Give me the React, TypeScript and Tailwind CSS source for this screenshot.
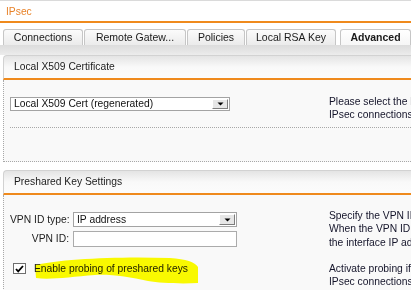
import React from "react";

function Select({ value, width }: { value: string; width: string }) {
  return (
    <div
      className={`relative flex h-full items-center border border-[#a3a3a3] bg-white pl-[3px] text-[#111] ${width}`}
    >
      <span className="whitespace-nowrap">{value}</span>
      <span className="absolute top-[1px] right-[1px] bottom-[1px] flex w-[16px] items-center justify-center border border-t-white border-l-white border-r-[#7d7d7d] border-b-[#7d7d7d] bg-[#e6e6e6]">
        <svg width="7" height="4" viewBox="0 0 7 4">
          <path d="M0.5 0.5h6L3.5 3.5z" fill="#000" />
        </svg>
      </span>
    </div>
  );
}

function Tab({
  label,
  className,
  active = false,
}: {
  label: string;
  className: string;
  active?: boolean;
}) {
  return (
    <div
      className={`flex h-[16px] shrink-0 items-center justify-center rounded-t-[3px] border border-b-0 border-[#c6c6c6] text-[10.5px] text-[#1a1a1a] ${
        active
          ? "bg-gradient-to-b from-white to-[#f6f6f6] font-bold"
          : "bg-gradient-to-b from-[#fbfbfb] to-[#ebebeb]"
      } ${className}`}
    >
      {label}
    </div>
  );
}

function SectionHeader({ title }: { title: string }) {
  return (
    <div className="box-border flex h-[25px] items-center rounded-tl-[4px] border-t border-l border-b-2 border-t-[#d2d2d2] border-l-[#d2d2d2] border-b-[#ef8a1d] bg-gradient-to-b from-[#e4e4e4] via-[#f9f9f9] to-[#fcfcfc] pl-[10px] text-[#1c1c1c]">
      {title}
    </div>
  );
}

export default function App() {
  return (
    <div className="relative h-[290px] w-[411px] overflow-hidden bg-white font-['Liberation_Sans',Arial,sans-serif] text-[10.3px]">
      {/* page title */}
      <div className="box-border h-[23px] border-t border-b-2 border-t-[#dadada] border-b-[#ef8a1d]">
        <div className="pt-[3px] pl-[6px] leading-[16px] text-[#e8832a]">IPsec</div>
      </div>

      {/* tabs */}
      <div className="mt-[6px] flex h-[16px] items-end">
        <Tab label="Connections" className="ml-[3px] w-[80px]" />
        <Tab label="Remote Gatew..." className="ml-[1px] w-[102px]" />
        <Tab label="Policies" className="ml-[1px] w-[58px]" />
        <Tab label="Local RSA Key" className="ml-[1px] w-[90px]" />
        <Tab label="Advanced" className="ml-[4px] w-[71px]" active />
      </div>
      <div className="h-[10px] bg-gradient-to-b from-[#dcdcdc] to-[#ececec]" />

      {/* Local X509 Certificate */}
      <section className="ml-[3px]">
        <SectionHeader title="Local X509 Certificate" />
        <div className="box-border h-[82px] border-b border-l border-dotted border-[#a8a8a8] bg-[#f9f9f9] pt-[15px]">
          <div className="flex">
            <div className="w-[325px] shrink-0 pl-[6px]">
              <div className="mt-[2px] h-[14px]">
                <Select value="Local X509 Cert (regenerated)" width="w-[220px]" />
              </div>
            </div>
            <div className="whitespace-nowrap leading-[13px] text-[#14142a]">
              <div>Please select the local certificate to be used</div>
              <div>IPsec connections using X509 authentication.</div>
            </div>
          </div>
          <div className="mt-[6px] ml-[6px] border-t border-dotted border-[#a8a8a8]" />
        </div>
      </section>

      {/* Preshared Key Settings */}
      <section className="mt-[8px] ml-[3px]">
        <SectionHeader title="Preshared Key Settings" />
        <div className="h-[120px] border-l border-dotted border-[#a8a8a8] bg-[#f9f9f9] pt-[14px]">
          <div className="flex">
            <div className="w-[325px] shrink-0 pl-[6px] text-[#222]">
              <div className="mt-[3px] flex h-[15px] items-center gap-[4px]">
                <span className="w-[59px] text-right whitespace-nowrap">VPN ID type:</span>
                <Select value="IP address" width="w-[164px]" />
              </div>
              <div className="mt-[4px] flex h-[16px] items-center gap-[4px]">
                <span className="w-[59px] text-right whitespace-nowrap">VPN ID:</span>
                <div className="h-full w-[164px] border border-[#ababab] bg-white" />
              </div>
              <div className="mt-[15px] flex h-[13px] items-center">
                <span className="ml-[3px] flex h-[11px] w-[13px] items-center justify-center border border-[#6e6e6e] bg-white">
                  <svg width="9" height="8" viewBox="0 0 9 8">
                    <path d="M1 4l2.2 2.4L8 1" fill="none" stroke="#000" strokeWidth="1.8" />
                  </svg>
                </span>
                <span className="ml-[8px] whitespace-nowrap">Enable probing of preshared keys</span>
              </div>
            </div>
            <div className="whitespace-nowrap leading-[13.3px] text-[#14142a]">
              <div>Specify the VPN ID type and value to be used.</div>
              <div>When the VPN ID type is IP address, then</div>
              <div>the interface IP address is used by default.</div>
              <div>&nbsp;</div>
              <div>Activate probing if you need different keys for</div>
              <div>IPsec connections with dynamic IP addresses.</div>
            </div>
          </div>
        </div>
      </section>

      {/* highlighter mark */}
      <svg
        className="pointer-events-none absolute top-0 left-0 mix-blend-multiply"
        width="411"
        height="290"
        viewBox="0 0 411 290"
      >
        <path
          d="M35 265C60 259 120 256 170 258C186 259 195 262 198 267L198 283C180 284 160 283 148 281C130 277 110 274 95 275C70 277 50 280 36 278Z"
          fill="#ffff00"
        />
      </svg>
    </div>
  );
}
